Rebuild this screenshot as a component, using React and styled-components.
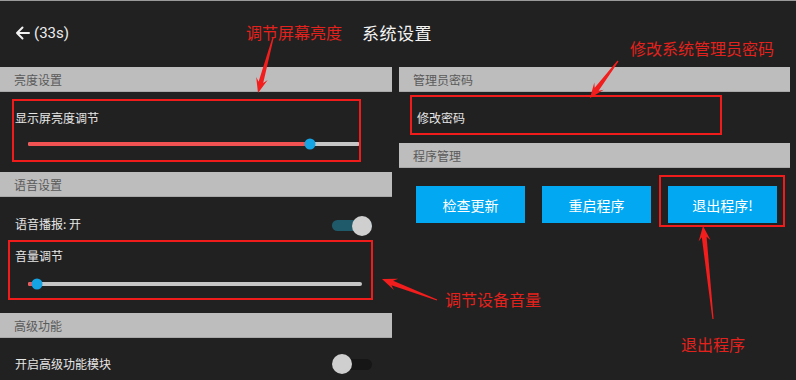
import React from "react";
import styled, { createGlobalStyle } from "styled-components";

const GlobalStyle = createGlobalStyle`
  html, body {
    margin: 0;
    padding: 0;
    background: #212121;
  }
  body {
    font-family: "Noto Sans CJK SC", "Noto Sans", Roboto, sans-serif;
  }
`;

const arrowPoints = (x1, y1, x2, y2) => {
  // tapered arrow from tail (x1,y1) to tip (x2,y2)
  const dx = x2 - x1;
  const dy = y2 - y1;
  const len = Math.hypot(dx, dy);
  const ux = dx / len;
  const uy = dy / len;
  const px = -uy;
  const py = ux;
  const headLen = 15;
  const headW = 6;
  const neckW = 2.4;
  const tailW = 0.6;
  const bx = x2 - ux * headLen;
  const by = y2 - uy * headLen;
  const nx = x2 - ux * (headLen - 4);
  const ny = y2 - uy * (headLen - 4);
  const pts = [
    [x1 + px * tailW, y1 + py * tailW],
    [nx + px * neckW, ny + py * neckW],
    [bx + px * headW, by + py * headW],
    [x2, y2],
    [bx - px * headW, by - py * headW],
    [nx - px * neckW, ny - py * neckW],
    [x1 - px * tailW, y1 - py * tailW],
  ];
  return pts.map((p) => p.map((v) => v.toFixed(1)).join(",")).join(" ");
};

function App() {
  return (
    <>
      <GlobalStyle />
      <Screen>
        <Header>
          <Back>
            <svg width="15" height="14" viewBox="0 0 15 14">
              <path
                d="M14 7H2M7.5 1.5L2 7l5.5 5.5"
                fill="none"
                stroke="#f2f2f2"
                strokeWidth="2"
                strokeLinecap="round"
                strokeLinejoin="round"
              />
            </svg>
            <span>(33s)</span>
          </Back>
          <Title>系统设置</Title>
          <span />
        </Header>

        <Body>
          <Column>
            <SectionBar>亮度设置</SectionBar>
            <SliderBlock $height={80}>
              <Label>显示屏亮度调节</Label>
              <Slider $pct={85} $right={32} />
            </SliderBlock>

            <SectionBar>语音设置</SectionBar>
            <ToggleRow $height={46} $top={7}>
              <Label>语音播报: 开</Label>
              <Toggle $on />
            </ToggleRow>
            <SliderBlock $height={70} $labelTop={5}>
              <Label>音量调节</Label>
              <Slider $pct={2.7} $right={30} />
            </SliderBlock>

            <SectionBar>高级功能</SectionBar>
            <ToggleRow $height={52}>
              <Label>开启高级功能模块</Label>
              <Toggle />
            </ToggleRow>
          </Column>

          <Column>
            <SectionBar>管理员密码</SectionBar>
            <PlainRow>
              <Label>修改密码</Label>
            </PlainRow>
            <SectionBar>程序管理</SectionBar>
            <ButtonRow>
              <ActionButton>检查更新</ActionButton>
              <ActionButton>重启程序</ActionButton>
              <ActionButton>退出程序!</ActionButton>
            </ButtonRow>
          </Column>
        </Body>

        <Annotations>
          <MarkBox style={{ left: 12, top: 98, width: 349, height: 63 }} />
          <MarkBox style={{ left: 8, top: 239, width: 365, height: 60 }} />
          <MarkBox style={{ left: 410, top: 94, width: 312, height: 40 }} />
          <MarkBox style={{ left: 659, top: 174, width: 126, height: 52 }} />

          <Note style={{ left: 246, top: 20 }}>调节屏幕亮度</Note>
          <Note style={{ left: 630, top: 36 }}>修改系统管理员密码</Note>
          <Note style={{ left: 445, top: 287 }}>调节设备音量</Note>
          <Note style={{ left: 681, top: 332 }}>退出程序</Note>

          <ArrowLayer width="796" height="380" viewBox="0 0 796 380">
            <polygon points={arrowPoints(273, 37, 258, 92)} />
            <polygon points={arrowPoints(618, 60, 590, 97)} />
            <polygon points={arrowPoints(437, 299, 382, 278)} />
            <polygon points={arrowPoints(713, 318, 703, 225)} />
          </ArrowLayer>
        </Annotations>
      </Screen>
    </>
  );
}

const Screen = styled.div`
  position: relative;
  width: 796px;
  height: 380px;
  overflow: hidden;
  background: #212121;
  border-top: 1px solid #9a9a9a;
  box-sizing: border-box;
`;

const Header = styled.div`
  height: 66px;
  display: grid;
  grid-template-columns: 1fr auto 1fr;
  align-items: center;
  padding: 0 0 0 15px;
  box-sizing: border-box;
`;

const Back = styled.div`
  display: flex;
  align-items: center;
  gap: 4px;
  color: #ececec;
  font-family: Roboto, "Liberation Sans", sans-serif;
  font-size: 15px;
  margin-top: -3px;
`;

const Title = styled.div`
  color: #f4f4f4;
  font-size: 17px;
  letter-spacing: 0.5px;
  margin-top: -3px;
  margin-left: -17px;
`;

const Body = styled.div`
  display: grid;
  grid-template-columns: 392px 391px;
  column-gap: 7px;
`;

const Column = styled.div`
  display: flex;
  flex-direction: column;
`;

const SectionBar = styled.div`
  height: 25px;
  background: #bdbdbd;
  border-bottom: 1px solid #a8a8a8;
  box-sizing: border-box;
  display: flex;
  align-items: center;
  padding-left: 14px;
  color: #5a5a5a;
  font-size: 12px;
`;

const Label = styled.div`
  color: #e6e6e6;
  font-size: 12px;
  line-height: 16px;
`;

const SliderBlock = styled.div`
  height: ${(p) => p.$height}px;
  box-sizing: border-box;
  padding: ${(p) => p.$labelTop ?? 18}px 0 0 15px;
  display: flex;
  flex-direction: column;
`;

const SliderTrack = styled.div`
  position: relative;
  height: 4px;
  margin: ${(p) => (p.$right === 32 ? 16 : 18)}px ${(p) => p.$right}px 0 13px;
  border-radius: 2px;
  background: #c6c6c6;
`;

const SliderFill = styled.div`
  height: 100%;
  border-radius: 2px;
  background: #f25252;
`;

const SliderThumb = styled.div`
  position: absolute;
  top: 50%;
  width: 11px;
  height: 11px;
  border-radius: 50%;
  background: #14a3e3;
  transform: translate(-50%, -50%);
`;

function Slider({ $pct, $right }) {
  return (
    <SliderTrack $right={$right}>
      <SliderFill style={{ width: `${$pct}%` }} />
      <SliderThumb style={{ left: `${$pct}%` }} />
    </SliderTrack>
  );
}

const ToggleRow = styled.div`
  height: ${(p) => p.$height}px;
  display: flex;
  align-items: center;
  justify-content: space-between;
  padding: ${(p) => p.$top ?? 0}px 20px 0 15px;
  box-sizing: border-box;
`;

const ToggleTrack = styled.div`
  position: relative;
  width: 40px;
  height: 11px;
  border-radius: 6px;
  background: ${(p) => (p.$on ? "#1f5a6b" : "#161616")};
  margin-top: ${(p) => (p.$on ? 4 : 0)}px;
`;

const ToggleKnob = styled.div`
  position: absolute;
  top: 50%;
  left: ${(p) => (p.$on ? "30px" : "10px")};
  width: 20px;
  height: 20px;
  border-radius: 50%;
  background: #cfcfcf;
  transform: translate(-50%, -50%);
`;

function Toggle({ $on }) {
  return (
    <ToggleTrack $on={$on}>
      <ToggleKnob $on={$on} />
    </ToggleTrack>
  );
}

const PlainRow = styled.div`
  height: 51px;
  display: flex;
  align-items: center;
  padding: 0 0 0 18px;
  box-sizing: border-box;
`;

const ButtonRow = styled.div`
  display: flex;
  gap: 17px;
  padding: 18px 0 0 17px;
`;

const ActionButton = styled.button`
  width: 109px;
  height: 37px;
  border: none;
  border-radius: 0;
  background: #03a8f2;
  color: #ffffff;
  font-family: "Noto Sans CJK SC", sans-serif;
  font-size: 14px;
  padding: 0;
  display: flex;
  align-items: center;
  justify-content: center;
`;

const Annotations = styled.div`
  position: absolute;
  inset: 0;
  pointer-events: none;
`;

const MarkBox = styled.div`
  position: absolute;
  border: 2px solid #f01c1c;
  box-sizing: border-box;
`;

const Note = styled.div`
  position: absolute;
  color: #e3211d;
  font-size: 16px;
  line-height: 22px;
  white-space: nowrap;
`;

const ArrowLayer = styled.svg`
  position: absolute;
  left: 0;
  top: 0;
  fill: #f21d1d;
`;

export default App;
